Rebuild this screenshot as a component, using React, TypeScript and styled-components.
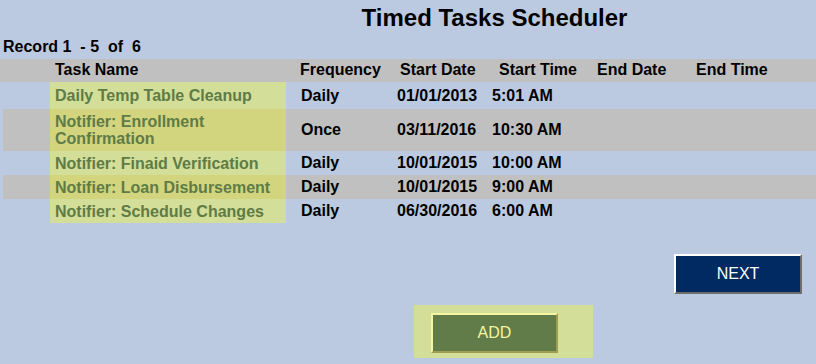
import styled, { createGlobalStyle } from "styled-components";

const GlobalStyle = createGlobalStyle`
  html, body {
    margin: 0;
    padding: 0;
    background: #bccae1;
  }
  body {
    font-family: "Liberation Sans", Arial, sans-serif;
    color: #000;
  }
`;

type Task = {
  name: string;
  frequency: string;
  startDate: string;
  startTime: string;
  endDate?: string;
  endTime?: string;
  height: number;
};

const tasks: Task[] = [
  { name: "Daily Temp Table Cleanup", frequency: "Daily", startDate: "01/01/2013", startTime: "5:01 AM", height: 27 },
  { name: "Notifier: Enrollment Confirmation", frequency: "Once", startDate: "03/11/2016", startTime: "10:30 AM", height: 42 },
  { name: "Notifier: Finaid Verification", frequency: "Daily", startDate: "10/01/2015", startTime: "10:00 AM", height: 24 },
  { name: "Notifier: Loan Disbursement", frequency: "Daily", startDate: "10/01/2015", startTime: "9:00 AM", height: 24 },
  { name: "Notifier: Schedule Changes", frequency: "Daily", startDate: "06/30/2016", startTime: "6:00 AM", height: 24 },
];

const Page = styled.div`
  width: 816px;
  height: 364px;
  overflow: hidden;
  background: #bccae1;
`;

const Title = styled.h1`
  margin: 0;
  padding: 4px 0 0 173px;
  font-size: 24px;
  line-height: 28px;
  font-weight: bold;
  text-align: center;
`;

const RecordInfo = styled.div`
  margin-top: 6px;
  padding-left: 3px;
  font-size: 16px;
  line-height: 18px;
  font-weight: bold;
  white-space: pre;
`;

const HeaderRow = styled.div`
  margin-top: 3px;
  height: 23px;
  box-sizing: border-box;
  padding-top: 2px;
  background: #c0c0c0;
  display: grid;
  grid-template-columns: 50px 250px 100px 99px 98px 99px 1fr;
  font-size: 16px;
  line-height: 18px;
  font-weight: bold;
`;

const HeadCell = styled.div<{ $indent?: number }>`
  padding-left: ${(p) => p.$indent ?? 0}px;
  white-space: nowrap;
`;

const Body = styled.div`
  margin-left: 3px;
`;

const Row = styled.div<{ $alt: boolean }>`
  display: grid;
  grid-template-columns: 47px 236px 111px 95px 1fr;
  align-items: stretch;
  background: ${(p) => (p.$alt ? "#c0c0c0" : "transparent")};
  font-size: 16px;
  font-weight: bold;
`;

const Cell = styled.div<{ $indent?: number }>`
  display: flex;
  align-items: center;
  padding-left: ${(p) => p.$indent ?? 0}px;
  line-height: 18px;
  white-space: nowrap;
`;

const NameCell = styled.div<{ $alt: boolean }>`
  display: flex;
  align-items: center;
  padding: 0 2px 0 5px;
  background: ${(p) => (p.$alt ? "#d2d57e" : "#d3de98")};
  color: #5f7b46;
  line-height: 17px;
`;

const NextRow = styled.div`
  display: flex;
  justify-content: flex-end;
  margin-top: 31px;
  padding-right: 14px;
`;

const NavButton = styled.button`
  width: 128px;
  height: 40px;
  box-sizing: border-box;
  background: #002a61;
  color: #fff;
  border: 2px solid;
  border-color: #ffffff #6e6e6e #6e6e6e #ffffff;
  font-family: "Liberation Sans", Arial, sans-serif;
  font-size: 16px;
  padding: 0;
`;

const AddArea = styled.div`
  margin: 11px 0 0 414px;
  width: 179px;
  height: 53px;
  box-sizing: border-box;
  padding: 8px 0 0 17px;
  background: #d3de98;
`;

const AddButton = styled.button`
  width: 127px;
  height: 40px;
  box-sizing: border-box;
  background: #617c49;
  color: #f4f4a0;
  border: 2px solid;
  border-color: #f6f6a2 #9e9e4e #9e9e4e #f6f6a2;
  font-family: "Liberation Sans", Arial, sans-serif;
  font-size: 16px;
  padding: 0;
`;

export default function App() {
  return (
    <Page>
      <GlobalStyle />
      <Title>Timed Tasks Scheduler</Title>
      <RecordInfo>{"Record 1  - 5  of  6"}</RecordInfo>
      <HeaderRow>
        <HeadCell />
        <HeadCell $indent={5}>Task Name</HeadCell>
        <HeadCell>Frequency</HeadCell>
        <HeadCell>Start Date</HeadCell>
        <HeadCell>Start Time</HeadCell>
        <HeadCell>End Date</HeadCell>
        <HeadCell>End Time</HeadCell>
      </HeaderRow>
      <Body>
        {tasks.map((t, i) => (
          <Row key={t.name} $alt={i % 2 === 1} style={{ height: t.height }}>
            <Cell />
            <NameCell $alt={i % 2 === 1}>{t.name}</NameCell>
            <Cell $indent={15}>{t.frequency}</Cell>
            <Cell>{t.startDate}</Cell>
            <Cell>{t.startTime}</Cell>
          </Row>
        ))}
      </Body>
      <NextRow>
        <NavButton>NEXT</NavButton>
      </NextRow>
      <AddArea>
        <AddButton>ADD</AddButton>
      </AddArea>
    </Page>
  );
}
